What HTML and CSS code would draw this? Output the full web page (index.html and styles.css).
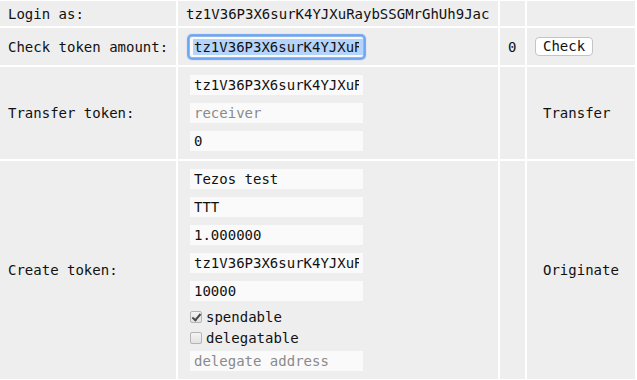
FILE: index.html
```html
<!DOCTYPE html>
<html>
<head>
<meta charset="utf-8">
<link rel="stylesheet" href="styles.css">
</head>
<body>
<div class="grid">
  <div class="cell label">Login as:</div>
  <div class="cell">tz1V36P3X6surK4YJXuRaybSSGMrGhUh9Jac</div>
  <div class="cell"></div>
  <div class="cell"></div>

  <div class="cell label">Check token amount:</div>
  <div class="cell"><input class="field focused" type="text" value="tz1V36P3X6surK4YJXuRaybSSGMrGhUh9Jac"></div>
  <div class="cell">0</div>
  <div class="cell act"><button class="btn">Check</button></div>

  <div class="cell label">Transfer token:</div>
  <div class="cell stack">
    <input class="field" type="text" value="tz1V36P3X6surK4YJXuRaybSSGMrGhUh9Jac">
    <input class="field" type="text" placeholder="receiver">
    <input class="field" type="text" value="0">
  </div>
  <div class="cell"></div>
  <div class="cell act"><button class="btn plain">Transfer</button></div>

  <div class="cell label">Create token:</div>
  <div class="cell stack">
    <input class="field" type="text" value="Tezos test">
    <input class="field" type="text" value="TTT">
    <input class="field" type="text" value="1.000000">
    <input class="field" type="text" value="tz1V36P3X6surK4YJXuRaybSSGMrGhUh9Jac">
    <input class="field" type="text" value="10000">
    <label class="check first"><input type="checkbox" class="box" checked>spendable</label>
    <label class="check"><input type="checkbox" class="box">delegatable</label>
    <input class="field after" type="text" placeholder="delegate address">
  </div>
  <div class="cell"></div>
  <div class="cell act"><button class="btn plain">Originate</button></div>
</div>
</body>
</html>
```
FILE: styles.css
```css
html, body {
  margin: 0;
  padding: 0;
  background: #ffffff;
}
body {
  font-family: "DejaVu Sans Mono", "Liberation Mono", monospace;
  font-size: 14px;
  color: #111;
}
.grid {
  display: grid;
  grid-template-columns: 176px 320px 25px 108px;
  grid-template-rows: 25px 37px auto auto;
  gap: 2px;
  padding-top: 1px;
}
.cell {
  background: #eeeeee;
  display: flex;
  align-items: center;
  padding: 0 8px;
  white-space: nowrap;
  overflow: hidden;
}
.stack {
  flex-direction: column;
  align-items: flex-start;
  padding: 8px 8px 8px 12px;
}
.field {
  box-sizing: border-box;
  width: 173px;
  height: 20px;
  border: 0;
  margin: 0 0 8px 0;
  padding: 0 4px;
  background: #fafafa;
  font-family: "DejaVu Sans Mono", "Liberation Mono", monospace;
  font-size: 14px;
  color: #111;
  outline: none;
}
.stack .field:last-child {
  margin-bottom: 0;
}
.field::placeholder {
  color: #8a8a8a;
}
.focused {
  margin: 0 0 0 4px;
  border-radius: 2px;
  background: linear-gradient(#b4d4fb, #b4d4fb) no-repeat 3px 2px / 170px 16px, #fafafa;
  box-shadow: 0 0 0 1px #8fb8f0, 0 0 1px 3px #6ea5f2;
}
.check {
  display: flex;
  align-items: center;
  height: 21px;
  color: #111;
}
.check.first {
  margin-top: -3px;
}
.field.after {
  margin-top: 3px;
}
.box {
  appearance: none;
  -webkit-appearance: none;
  box-sizing: border-box;
  width: 12px;
  height: 12px;
  margin: 0 4px 0 0;
  border: 1px solid #b5b5b5;
  border-radius: 2px;
  background: linear-gradient(#f4f4f4, #e2e2e2);
  position: relative;
}
.box:checked::after {
  content: "";
  position: absolute;
  left: 3px;
  top: 0px;
  width: 3px;
  height: 7px;
  border: solid #4a4a4a;
  border-width: 0 2px 2px 0;
  transform: rotate(40deg);
}
.act {
  padding-left: 8px;
}
.btn {
  box-sizing: border-box;
  height: 19px;
  padding: 0 7px;
  border: 1px solid #c4c4c4;
  border-radius: 4px;
  background: #ffffff;
  font-family: "DejaVu Sans Mono", "Liberation Mono", monospace;
  font-size: 14px;
  color: #111;
  line-height: 17px;
}
.btn.plain {
  border-color: transparent;
  background: transparent;
}
```
